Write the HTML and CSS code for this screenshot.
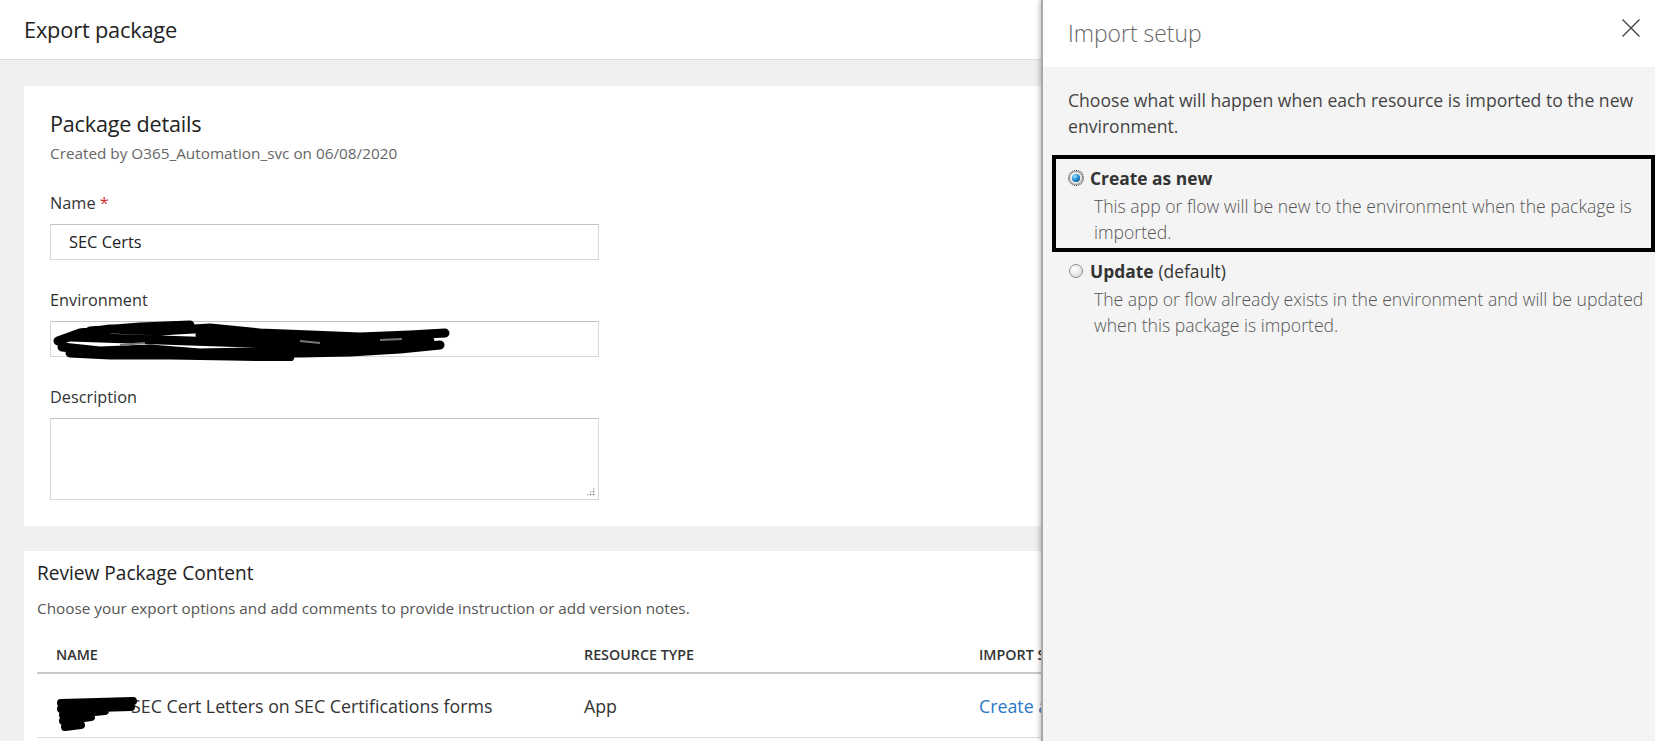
FILE: index.html
```html
<!DOCTYPE html>
<html lang="en">
<head>
<meta charset="utf-8">
<title>Export package</title>
<link rel="stylesheet" href="styles.css">
</head>
<body>
<div class="page">
  <header class="topbar"><h1 class="page-title">Export package</h1></header>
  <main class="content">
    <section class="card details">
      <h2 class="card-title">Package details</h2>
      <p class="meta">Created by O365_Automation_svc on 06/08/2020</p>
      <div class="field">
        <label class="label">Name <span class="req">*</span></label>
        <div class="input">SEC Certs</div>
      </div>
      <div class="field">
        <label class="label">Environment</label>
        <div class="input env">
          <svg class="redact redact-env" viewBox="0 0 404 42" width="404" height="42" aria-hidden="true">
            <path d="M8 22 L30 14 L60 10 L110 12 L160 9 L210 14 L260 16 L310 18 L360 16 L395 14 M12 28 L50 32 L100 30 L150 34 L200 33 L250 34 L300 33 L350 30 L390 26 M20 18 L80 20 L140 22 L200 24 L260 26 L320 26 L380 22 M40 12 L90 8 L140 6 M20 34 L60 36 L120 36 L180 37 L240 38 M150 16 L220 20 L290 22" fill="none" stroke="#000" stroke-width="9" stroke-linecap="round" stroke-linejoin="round"/>
            <path d="M70 26 L95 24 M250 22 L270 24 M330 21 L352 20" fill="none" stroke="#777" stroke-width="2"/>
          </svg>
        </div>
      </div>
      <div class="field">
        <label class="label">Description</label>
        <div class="input textarea"><span class="grip"></span></div>
      </div>
    </section>
    <section class="card review">
      <h2 class="review-title">Review Package Content</h2>
      <p class="review-desc">Choose your export options and add comments to provide instruction or add version notes.</p>
      <div class="table">
        <div class="row head">
          <div class="col c-name">NAME</div>
          <div class="col c-type">RESOURCE TYPE</div>
          <div class="col c-import">IMPORT SETUP</div>
        </div>
        <div class="row body">
          <div class="col c-name"><span class="name-cell"><svg class="redact redact-row" viewBox="0 0 84 40" width="84" height="40" aria-hidden="true"><path d="M6 8 L78 6 M6 14 L76 12 M8 20 L50 16 M8 26 L36 22 M10 32 L26 30" fill="none" stroke="#000" stroke-width="8" stroke-linecap="round" stroke-linejoin="round"/></svg>SEC Cert Letters on SEC Certifications forms</span></div>
          <div class="col c-type">App</div>
          <div class="col c-import"><a class="link" href="#">Create as new</a></div>
        </div>
      </div>
    </section>
  </main>

  <aside class="panel">
    <div class="panel-head">
      <h2 class="panel-title">Import setup</h2>
      <button class="close" aria-label="Close">
        <svg viewBox="0 0 18 18" width="18" height="18"><path d="M0.5 0.5 L17.5 17.5 M17.5 0.5 L0.5 17.5" stroke="#444" stroke-width="1.4" fill="none"/></svg>
      </button>
    </div>
    <div class="panel-body">
      <p class="panel-intro">Choose what will happen when each resource is imported to the new environment.</p>
      <div class="option highlight">
        <div class="opt-line"><span class="radio on"></span><span class="opt-label">Create as new</span></div>
        <p class="opt-desc">This app or flow will be new to the environment when the package is imported.</p>
      </div>
      <div class="option plain">
        <div class="opt-line"><span class="radio"></span><span class="opt-label">Update</span><span class="opt-extra">(default)</span></div>
        <p class="opt-desc">The app or flow already exists in the environment and will be updated when this package is imported.</p>
      </div>
    </div>
  </aside>
</div>
</body>
</html>
```
FILE: styles.css
```css
* { box-sizing: border-box; }
html, body { margin: 0; padding: 0; height: 100%; }
body {
  font-family: "Open Sans", "Noto Sans", "Liberation Sans", sans-serif;
  color: #333;
  background: #efefef;
  overflow: hidden;
}
.page { position: relative; width: 1655px; height: 741px; overflow: hidden; }

.topbar {
  height: 60px;
  background: #fff;
  border-bottom: 1px solid #dcdcdc;
  display: flex;
  align-items: center;
  padding-left: 24px;
}
.page-title { margin: 0; font-size: 21.8px; font-weight: 400; color: #222; letter-spacing: -0.2px; }

.content { padding: 26px 0 0 24px; display: flex; flex-direction: column; gap: 25px; }
.card { background: #fff; width: 1580px; }

.details { padding: 24px 26px 0; height: 440px; }
.card-title { margin: 0; font-size: 21.6px; font-weight: 400; color: #222; line-height: 28px; letter-spacing: -0.2px; }
.meta { margin: 5px 0 0; font-size: 15.3px; color: #666; line-height: 20px; }

.field { margin-top: 29px; width: 549px; }
.label { display: block; font-size: 16.3px; color: #333; line-height: 22px; margin-bottom: 10px; }
.req { color: #d13438; }
.input {
  height: 36px;
  border: 1px solid #d8d8d8;
  border-top-color: #c2c2c2;
  background: #fff;
  font-size: 16.4px;
  color: #222;
  line-height: 34px;
  padding-left: 18px;
  position: relative;
}
.redact-env { position: absolute; left: -1px; top: -3px; }
.textarea { height: 82px; }
.grip {
  position: absolute; right: 3px; bottom: 3px; width: 9px; height: 9px;
  background: radial-gradient(circle, #999 0.9px, transparent 1.1px) 0 0 / 3px 3px;
  clip-path: polygon(100% 0, 100% 100%, 0 100%);
}

.review { padding: 9px 0 0 13px; height: 200px; }
.review-title { margin: 0; font-size: 19.1px; font-weight: 400; color: #222; line-height: 26px; }
.review-desc { margin: 12px 0 0; font-size: 15.3px; color: #555; line-height: 21px; }
.table { margin-top: 18px; width: 1540px; }
.row { display: flex; align-items: center; }
.row.head { height: 37px; border-bottom: 2px solid #c8c8c8; font-size: 14.3px; font-weight: 600; color: #333; }
.row.body { height: 64px; border-bottom: 1px solid #dcdcdc; font-size: 17.8px; color: #333; }
.col { flex: none; }
.c-name { width: 547px; padding-left: 19px; }
.c-type { width: 395px; }
.c-import { width: 400px; }
.name-cell { position: relative; padding-left: 75px; }
.redact-row { position: absolute; left: -1px; top: 1px; }
.link { color: #2b78c8; text-decoration: none; }

.panel {
  position: absolute; top: 0; right: 0; bottom: 0;
  width: 614px;
  background: #f4f4f4;
  border-left: 2px solid #a9a9a9;
  box-shadow: -1px 0 5px rgba(0,0,0,0.28);
  display: flex; flex-direction: column;
}
.panel-head {
  height: 67px; flex: none; background: #fff;
  display: flex; align-items: center; justify-content: space-between;
  padding: 0 15px 0 25px;
}
.panel-title { margin: 0; font-size: 22.9px; font-weight: 300; color: #666; line-height: 30px; }
.close { border: 0; background: none; padding: 0; margin-top: -12px; cursor: pointer; display: flex; }
.panel-body { padding: 21px 0 0 25px; }
.panel-intro { margin: 0; font-size: 17.6px; color: #444; line-height: 25.5px; width: 580px; }

.option { width: 603px; }
.highlight { border: 4px solid #000; margin: 16px 0 0 -16px; padding: 7.5px 0 3.5px 13px; }
.plain { margin: 8px 0 0 -16px; padding: 0 0 0 17px; }
.opt-line { display: flex; align-items: center; height: 22px; }
.opt-label { font-size: 17.4px; font-weight: 700; color: #333; margin-left: 7px; }
.opt-extra { font-size: 17.4px; color: #333; margin-left: 5px; }
.opt-desc { margin: 4px 0 0 25px; font-size: 17.6px; font-weight: 300; color: #555; line-height: 26px; width: 560px; }

.radio {
  width: 14px; height: 14px; border-radius: 50%; flex: none;
  border: 1px solid #8e8e8e;
  background: radial-gradient(circle at 40% 35%, #fff 0%, #e6e6e6 60%, #c9c9c9 100%);
  position: relative;
}
.radio.on { outline: 1px dotted #222; outline-offset: 0px; }
.radio.on::after {
  content: ""; position: absolute; left: 2px; top: 2px; width: 8px; height: 8px; border-radius: 50%;
  background: radial-gradient(circle at 35% 30%, #a8e4ff 0%, #1f8fd6 45%, #0b3d6e 100%);
}
```
